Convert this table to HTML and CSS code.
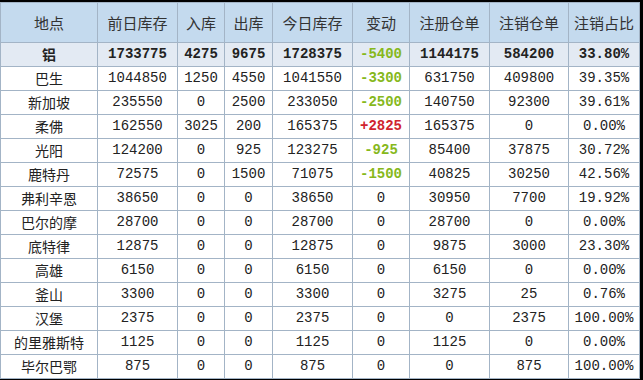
FILE: index.html
```html
<!DOCTYPE html>
<html lang="zh">
<head>
<meta charset="utf-8">
<title>库存</title>
<link rel="stylesheet" href="styles.css">
</head>
<body>
<div class="frame">
<table class="stock">
<colgroup>
<col class="c1"><col class="c2"><col class="c3"><col class="c4"><col class="c5"><col class="c6"><col class="c7"><col class="c8"><col class="c9">
</colgroup>
<thead>
<tr><th>地点</th><th>前日库存</th><th>入库</th><th>出库</th><th>今日库存</th><th>变动</th><th>注册仓单</th><th>注销仓单</th><th>注销占比</th></tr>
</thead>
<tbody>
<tr class="total"><td class="name">铝</td><td>1733775</td><td>4275</td><td>9675</td><td>1728375</td><td class="down">-5400</td><td>1144175</td><td>584200</td><td>33.80%</td></tr>
<tr><td class="name">巴生</td><td>1044850</td><td>1250</td><td>4550</td><td>1041550</td><td class="down">-3300</td><td>631750</td><td>409800</td><td>39.35%</td></tr>
<tr><td class="name">新加坡</td><td>235550</td><td>0</td><td>2500</td><td>233050</td><td class="down">-2500</td><td>140750</td><td>92300</td><td>39.61%</td></tr>
<tr><td class="name">柔佛</td><td>162550</td><td>3025</td><td>200</td><td>165375</td><td class="up">+2825</td><td>165375</td><td>0</td><td>0.00%</td></tr>
<tr><td class="name">光阳</td><td>124200</td><td>0</td><td>925</td><td>123275</td><td class="down">-925</td><td>85400</td><td>37875</td><td>30.72%</td></tr>
<tr><td class="name">鹿特丹</td><td>72575</td><td>0</td><td>1500</td><td>71075</td><td class="down">-1500</td><td>40825</td><td>30250</td><td>42.56%</td></tr>
<tr><td class="name">弗利辛恩</td><td>38650</td><td>0</td><td>0</td><td>38650</td><td>0</td><td>30950</td><td>7700</td><td>19.92%</td></tr>
<tr><td class="name">巴尔的摩</td><td>28700</td><td>0</td><td>0</td><td>28700</td><td>0</td><td>28700</td><td>0</td><td>0.00%</td></tr>
<tr><td class="name">底特律</td><td>12875</td><td>0</td><td>0</td><td>12875</td><td>0</td><td>9875</td><td>3000</td><td>23.30%</td></tr>
<tr><td class="name">高雄</td><td>6150</td><td>0</td><td>0</td><td>6150</td><td>0</td><td>6150</td><td>0</td><td>0.00%</td></tr>
<tr><td class="name">釜山</td><td>3300</td><td>0</td><td>0</td><td>3300</td><td>0</td><td>3275</td><td>25</td><td>0.76%</td></tr>
<tr><td class="name">汉堡</td><td>2375</td><td>0</td><td>0</td><td>2375</td><td>0</td><td>0</td><td>2375</td><td>100.00%</td></tr>
<tr><td class="name">的里雅斯特</td><td>1125</td><td>0</td><td>0</td><td>1125</td><td>0</td><td>1125</td><td>0</td><td>0.00%</td></tr>
<tr><td class="name">毕尔巴鄂</td><td>875</td><td>0</td><td>0</td><td>875</td><td>0</td><td>0</td><td>875</td><td>100.00%</td></tr>
</tbody>
</table>
</div>
</body>
</html>
```

FILE: styles.css
```css
html, body {
  margin: 0;
  padding: 0;
  background: #000;
}
.frame {
  padding-top: 2px;
  width: 639px;
}
.stock {
  border-collapse: collapse;
  table-layout: fixed;
  width: 639px;
  background: #fff;
  color: #222;
  font-family: "Liberation Mono", "Noto Sans CJK SC", monospace;
  font-size: 14px;
}
.c1 { width: 97px; }
.c2 { width: 80px; }
.c3 { width: 47px; }
.c4 { width: 48px; }
.c5 { width: 80px; }
.c6 { width: 57px; }
.c7 { width: 80px; }
.c8 { width: 79px; }
.c9 { width: 71px; }
.stock th, .stock td {
  border: 1px solid #a3b4c6;
  text-align: center;
  padding: 0;
  white-space: nowrap;
  overflow: hidden;
}
.stock th {
  height: 39px;
  background: #c4daee;
  font-family: "Noto Sans CJK SC", sans-serif;
  font-weight: normal;
  font-size: 15px;
  color: #333;
}
.stock td {
  height: 23px;
  line-height: 23px;
}
.stock td.name {
  font-family: "Noto Sans CJK SC", sans-serif;
  font-size: 14px;
}
.total td {
  background: #e3eaf3;
  font-weight: bold;
}
.total td.name { font-weight: bold; }
.down {
  color: #86b81c;
  font-weight: bold;
}
.up {
  color: #d0242e;
  font-weight: bold;
}
```
